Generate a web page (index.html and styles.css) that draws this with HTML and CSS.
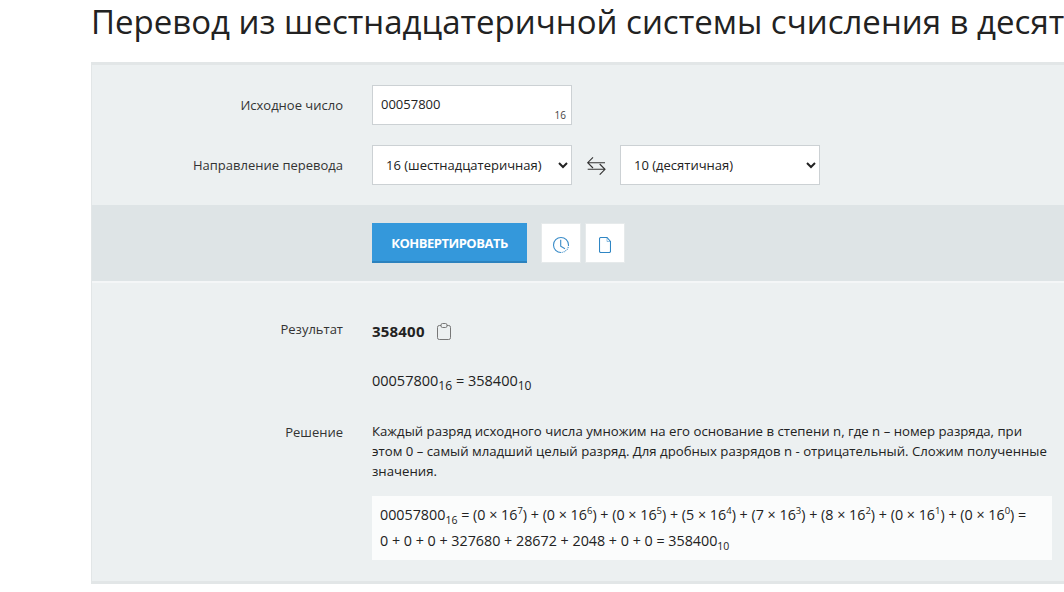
FILE: index.html
```html
<!DOCTYPE html>
<html lang="ru">

<head>
    <meta charset="UTF-8" />
    <title>Перевод из шестнадцатеричной системы счисления в десятичную</title>
    <link rel="stylesheet" href="styles.css">
</head>

<body>
    <div class="page">
        <h1>Перевод из шестнадцатеричной системы счисления в десятичную</h1>
        <div class="calc">
            <div class="calc-form">
                <div class="row">
                    <label class="row-label">Исходное число</label>
                    <div class="number-field">
                        <input type="text" value="00057800">
                        <span class="base-badge">16</span>
                    </div>
                </div>
                <div class="row">
                    <label class="row-label">Направление перевода</label>
                    <div class="direction">
                        <select class="base-select">
                            <option>16 (шестнадцатеричная)</option>
                        </select>
                        <svg class="swap-icon" width="20" height="20" viewBox="0 0 20 20" fill="none" stroke="#333" stroke-width="1.1">
                            <path d="M7 2.300 1.700 7.700 7 13M1.700 7.700H19" />
                            <path d="M13.700 9 19 14.300 13.700 19.700M19 14.300H1.700" />
                        </svg>
                        <select class="base-select">
                            <option>10 (десятичная)</option>
                        </select>
                    </div>
                </div>
            </div>

            <div class="calc-actions">
                <button class="convert-btn" type="button">КОНВЕРТИРОВАТЬ</button>
                <button class="icon-btn" type="button">
                    <svg width="18" height="18" viewBox="0 0 18 18" fill="none" stroke="#3a8cc8" stroke-width="1.1">
                        <path d="M9 16.500A7.500 7.500 0 1 1 16.500 9" />
                        <path d="M16.500 9A7.500 7.500 0 0 1 9 16.500" stroke-dasharray="1 1" />
                        <path d="M8.700 3.700v6.600l4.300 2.400" />
                    </svg>
                </button>
                <button class="icon-btn" type="button">
                    <svg width="12" height="16" viewBox="0 0 12 16" fill="none" stroke="#2f86c4" stroke-width="1.1">
                        <path d="M1.800 .5H8l3.500 4v9.700a1.300 1.300 0 0 1-1.300 1.300H1.800a1.300 1.300 0 0 1-1.300-1.300V1.800A1.300 1.300 0 0 1 1.800 .5Z" />
                        <path d="M8 .5v4h3.500" stroke-width="0.5" />
                    </svg>
                </button>
            </div>

            <div class="calc-result">
                <div class="row result-row">
                    <div class="row-label">Результат</div>
                    <div class="result-value">
                        <b>358400</b>
                        <svg width="14" height="17" viewBox="0 0 14 17" fill="none" stroke="#777" stroke-width="1">
                            <path d="M4 2.500H2.300A1.800 1.800 0 0 0 .5 4.300v10.400A1.800 1.800 0 0 0 2.300 16.500h9.400a1.800 1.800 0 0 0 1.800-1.800V4.300a1.800 1.800 0 0 0-1.800-1.800H10" />
                            <rect x="4" y=".5" width="6" height="4" rx="1.500" />
                        </svg>
                    </div>
                </div>
                <div class="row equation-row">
                    <div class="row-label"></div>
                    <div class="equation">00057800<sub>16</sub> = 358400<sub>10</sub></div>
                </div>
                <div class="row solution-row">
                    <div class="row-label">Решение</div>
                    <div class="solution">
                        <p>Каждый разряд исходного числа умножим на его основание в степени n, где n – номер разряда, при этом 0 – самый младший целый разряд. Для дробных разрядов n - отрицательный. Сложим полученные значения.</p>
                        <div class="solution-box">00057800<sub>16</sub> = (0 × 16<sup>7</sup>) + (0 × 16<sup>6</sup>) + (0 × 16<sup>5</sup>) + (5 × 16<sup>4</sup>) + (7 × 16<sup>3</sup>) + (8 × 16<sup>2</sup>) + (0 × 16<sup>1</sup>) + (0 × 16<sup>0</sup>) =<br>0 + 0 + 0 + 327680 + 28672 + 2048 + 0 + 0 = 358400<sub>10</sub></div>
                    </div>
                </div>
            </div>
        </div>
    </div>
</body>

</html>
```

FILE: styles.css
```css
* {
    box-sizing: border-box;
    font-family: "Open Sans", "Noto Sans", sans-serif;
}

html,
body {
    height: 100%;
    overflow: hidden;
}

body {
    margin: 0;
    background: #fff;
    color: #222;
    font-size: 13px;
}

.page {
    margin-left: 91px;
    width: 973px;
}

h1 {
    margin: 0;
    height: 62px;
    font-size: 33px;
    line-height: 44px;
    font-weight: 400;
    white-space: nowrap;
    overflow: hidden;
    color: #222;
}

.calc {
    background: #ecf0f1;
    border-top: 3px solid #e2e6e7;
    border-bottom: 3px solid #e2e6e7;
    border-left: 1px solid #e2e6e7;
}

.calc-form {
    padding: 20px 0 20px;
    height: 140px;
}

.row {
    display: flex;
}

.row-label {
    width: 251px;
    flex-shrink: 0;
    text-align: right;
    color: #333;
    line-height: 40px;
    margin-right: 29px;
}

.calc-form .row {
    margin-bottom: 20px;
    height: 40px;
}

.number-field {
    position: relative;
    width: 200px;
    height: 40px;
}

.number-field input {
    width: 100%;
    height: 100%;
    padding: 0 8px 2px;
    border: 1px solid #ccd1d4;
    background: #fff;
    font-size: 13px;
    color: #222;
    outline: none;
}

.base-badge {
    position: absolute;
    right: 6px;
    bottom: 3px;
    font-size: 10px;
    line-height: 14px;
    color: #444;
}

.direction {
    display: flex;
    align-items: center;
}

.base-select {
    width: 200px;
    height: 40px;
    padding-left: 9px;
    border: 1px solid #ccd1d4;
    border-radius: 0;
    background-color: #fff;
    font-size: 13px;
    color: #222;
}

.swap-icon {
    margin: 0 14px;
}

.calc-actions {
    display: flex;
    align-items: flex-start;
    gap: 14px;
    height: 76px;
    padding: 18px 0 0 280px;
    background: #dee4e6;
}

.convert-btn {
    width: 155px;
    height: 40px;
    padding: 2px 0 0;
    border: none;
    border-bottom: 2px solid #2c82be;
    background: #3498db;
    color: #fff;
    font-size: 13px;
    font-weight: 700;
    letter-spacing: -0.5px;
}

.icon-btn {
    display: flex;
    align-items: center;
    justify-content: center;
    width: 40px;
    height: 40px;
    padding: 3px 0 0;
    border: 1px solid #e6eaeb;
    background: #fff;
}

.icon-btn + .icon-btn {
    margin-left: -10px;
}

.calc-result {
    border-top: 2px solid #f4f6f7;
    padding-top: 34px;
    height: 300px;
}

.result-row .row-label,
.solution-row .row-label {
    line-height: 24px;
}

.result-row {
    height: 50px;
}

.solution-row {
    margin-top: 5px;
}

.result-value {
    display: flex;
    align-items: center;
    gap: 12px;
    height: 28px;
    font-size: 15px;
}

.result-value b {
    letter-spacing: 0.2px;
}

.equation-row {
    height: 48px;
}

.equation {
    padding-top: 2px;
    line-height: 24px;
    font-size: 14.500px;
}

.solution {
    width: 680px;
    line-height: 20px;
    font-size: 13.200px;
}

.solution p {
    margin: 1px 0 15px;
}

.solution-box {
    padding: 6px 8px;
    background: #fbfcfc;
    line-height: 26px;
    font-size: 14.300px;
    white-space: nowrap;
}

.solution-box sub,
.solution-box sup,
.equation sub {
    line-height: 0;
}

.solution-box sub {
    font-size: 10.500px;
}

.solution-box sup {
    font-size: 9.500px;
}
```
